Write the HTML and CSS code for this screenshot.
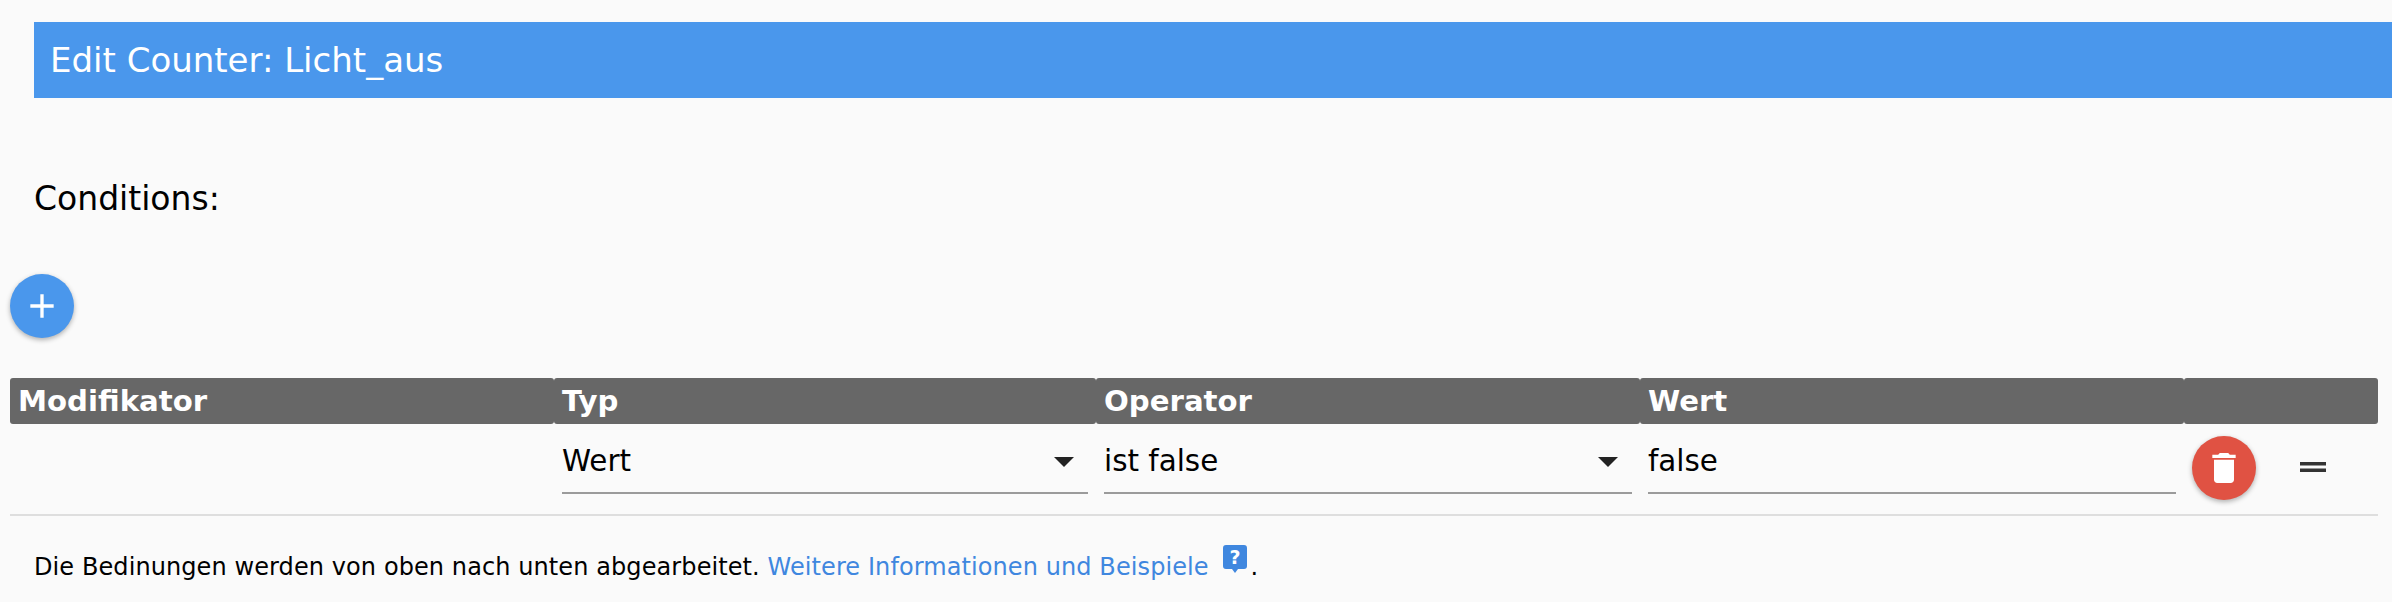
FILE: index.html
```html
<!DOCTYPE html>
<html lang="de">
<head>
<meta charset="utf-8">
<title>Edit Counter: Licht_aus</title>
<link rel="stylesheet" href="styles.css">
</head>
<body>
<header class="title-bar">Edit Counter: Licht_aus</header>
<h2 class="section-title">Conditions:</h2>
<button class="fab fab-add" type="button" aria-label="Add">
  <svg class="fab-icon" viewBox="0 0 24 24"><path d="M19 13h-6v6h-2v-6H5v-2h6V5h2v6h6v2z"/></svg>
</button>
<div class="table">
  <div class="th">Modifikator</div>
  <div class="th">Typ</div>
  <div class="th">Operator</div>
  <div class="th">Wert</div>
  <div class="th"></div>
  <div class="td"></div>
  <div class="td"><div class="field">Wert<span class="caret"></span></div></div>
  <div class="td"><div class="field">ist false<span class="caret"></span></div></div>
  <div class="td"><div class="field">false</div></div>
  <div class="td td-actions">
    <button class="fab fab-delete" type="button" aria-label="Delete">
      <svg class="fab-icon" viewBox="0 0 24 24"><path d="M6 19c0 1.1.9 2 2 2h8c1.1 0 2-.9 2-2V7H6v12zM19 4h-3.5l-1-1h-5l-1 1H5v2h14V4z"/></svg>
    </button>
    <svg class="drag" viewBox="0 0 26 10"><rect x="0" y="0" width="26" height="3.5"/><rect x="0" y="6.5" width="26" height="3.5"/></svg>
  </div>
</div>
<p class="note">Die Bedinungen werden von oben nach unten abgearbeitet. <a class="link" href="#">Weitere Informationen und Beispiele</a>
<svg class="help" viewBox="0 0 24 28"><path d="M3 0h18a3 3 0 0 1 3 3v18a3 3 0 0 1-3 3h-6l-3 4-3-4H3a3 3 0 0 1-3-3V3a3 3 0 0 1 3-3z"/><text class="help-mark" x="12" y="19">?</text></svg>.</p>
</body>
</html>
```

FILE: styles.css
```css
* { box-sizing: border-box; }
html, body { margin: 0; padding: 0; }
body {
  background: #fafafa;
  color: #000;
  font-family: "DejaVu Sans", "Liberation Sans", sans-serif;
  height: 602px;
  overflow: hidden;
}
.title-bar {
  margin: 22px 0 0 34px;
  height: 76px;
  padding-left: 16px;
  background: #4a97ec;
  color: #fff;
  font-size: 34px;
  line-height: 76px;
}
.section-title {
  margin: 81px 0 0 34px;
  font-size: 33px;
  font-weight: 400;
  line-height: 40px;
}
.fab {
  display: flex;
  align-items: center;
  justify-content: center;
  width: 64px;
  height: 64px;
  padding: 0;
  border: 0;
  border-radius: 50%;
  box-shadow: 0 2px 5px rgba(0, 0, 0, .3);
}
.fab-icon { width: 40px; height: 40px; fill: #fff; }
.fab-add { margin: 55px 0 0 10px; background: #4a97ec; }
.fab-delete { background: #e05243; }
.table {
  display: grid;
  grid-template-columns: 544px 542px 544px 544px 194px;
  width: 2368px;
  margin: 40px 0 0 10px;
}
.th {
  height: 46px;
  padding-left: 8px;
  background: #676767;
  border-radius: 3px;
  color: #fff;
  font-size: 29.2px;
  font-weight: 700;
  line-height: 46px;
}
.td {
  height: 92px;
  padding: 12px 8px 0;
  border-bottom: 2px solid #dedede;
}
.field {
  position: relative;
  height: 58px;
  border-bottom: 2px solid #9b9b9b;
  font-size: 29.4px;
  line-height: 50px;
}
.caret {
  position: absolute;
  right: 14px;
  top: 21px;
  border-left: 10px solid transparent;
  border-right: 10px solid transparent;
  border-top: 10px solid #222;
}
.td-actions {
  display: flex;
  align-items: flex-start;
  padding-left: 8px;
}
.drag { width: 26px; height: 10px; margin: 26px 0 0 44px; fill: #333; }
.note {
  margin: 29px 0 0 34px;
  font-size: 24px;
  letter-spacing: .09px;
  line-height: 32px;
}
.link { color: #3f87df; text-decoration: none; }
.help { width: 24px; height: 28px; margin: 0 3px 0 7px; vertical-align: 2px; fill: #3f87df; }
.help-mark { fill: #fff; font-size: 19px; font-weight: 700; text-anchor: middle; }
```
